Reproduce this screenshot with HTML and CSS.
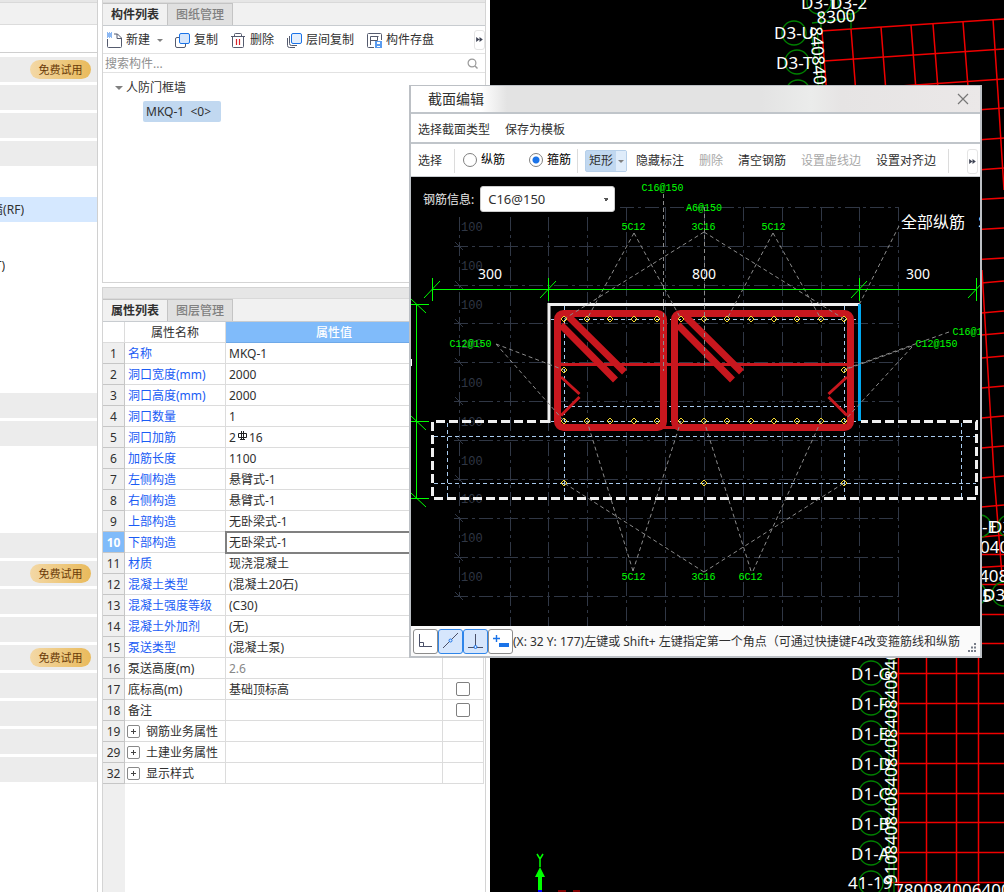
FILE: index.html
```html
<!DOCTYPE html>
<html lang="zh-CN">
<head>
<meta charset="utf-8">
<title>截面编辑</title>
<link rel="stylesheet" href="styles.css">
</head>
<body>
<div class="app">
  <nav class="side">
    <div class="strip"></div>
    <div class="side-head"></div>
    <div class="side-tools"></div>
    <ul class="modules">
      <li class="group"><button class="badge">免费试用</button></li>
      <li class="group"></li><li class="group"></li><li class="group"></li>
      <li></li>
      <li class="current"><span class="cut">墙(RF)</span></li>
      <li></li>
      <li><span class="cut short">T)</span></li>
      <li></li><li></li><li></li><li></li>
      <li class="group"></li><li class="group"></li>
      <li></li><li></li><li></li>
      <li class="group"></li>
      <li class="group"><button class="badge">免费试用</button></li>
      <li class="group"></li><li class="group"></li>
      <li class="group"><button class="badge">免费试用</button></li>
      <li class="group"></li><li class="group"></li><li class="group"></li><li class="group"></li>
    </ul>
  </nav>

  <main class="mid">
    <section class="panel components">
      <div class="strip"></div>
      <div class="tabs"><button class="tab on">构件列表</button><button class="tab">图纸管理</button></div>
      <div class="toolbar">
        <button class="tool new"><svg width="17" height="17" viewBox="0 0 17 17"><path d="M1.500 7v7.500q0 1 1 1h12q1 0 1-1V6l-4-4H8M11 2v4.500h4.500" fill="none" stroke="#555b6e"/><path d="M1 1h1M3 1h1M5 1h1M2 2h1M4 2h1M1 3h1M3 3h1M5 3h1M2 4h1M4 4h1M1 5h1M3 5h1M5 5h1" stroke="#1a73e8" stroke-width="1.200"/></svg>新建<i class="caret"></i></button>
        <button class="tool"><svg width="17" height="17" viewBox="0 0 17 17"><rect x="1.500" y="5.500" width="10" height="10" rx="1.500" fill="#fff" stroke="#555b6e"/><rect x="5.500" y="1.500" width="10" height="10" rx="1.500" fill="#d6e6fc" stroke="#1a73e8"/></svg>复制</button>
        <button class="tool"><svg width="17" height="17" viewBox="0 0 17 17"><path d="M1 4.500h14M4.500 4V2.500q0-1 1-1h5q1 0 1 1V4M2.500 5v9.500q0 1 1 1h9q1 0 1-1V5" fill="none" stroke="#555b6e"/><path d="M6.500 7v6M9.500 7v6" stroke="#d8232a" stroke-width="1.200"/></svg>删除</button>
        <button class="tool"><svg width="17" height="17" viewBox="0 0 17 17"><path d="M1.500 6v7.500q0 2 2 2H9M3.500 4v7.500q0 2 2 2H11" fill="none" stroke="#555b6e"/><rect x="5.500" y="1.500" width="10" height="10" rx="1.500" fill="#e4effd" stroke="#1a73e8"/></svg>层间复制</button>
        <button class="tool"><svg width="17" height="17" viewBox="0 0 17 17"><path d="M15.500 8V2.500q0-1-1-1h-12q-1 0-1 1v12q0 1 1 1H8M4.500 13V4.500h8M4.500 8.500h7V5" fill="none" stroke="#555b6e"/><path d="M9 9h7v7H9z" fill="#5a9cf0"/><path d="M11 10h3v2h-3zM11 14h3v1h-3z" fill="#fff"/></svg>构件存盘</button>
        <button class="more" aria-label="更多"><svg width="7" height="5" viewBox="0 0 8 6"><path d="M0 0l4 3-4 3zM4 0l4 3-4 3z" fill="#3f4455"/></svg></button>
      </div>
      <label class="search"><input type="text" placeholder="搜索构件..." aria-label="搜索构件"><svg width="12" height="12" viewBox="0 0 12 12"><circle cx="5" cy="5" r="3.900" fill="none" stroke="#999" stroke-width="1.200"/><path d="M8 8l2.500 2.500" stroke="#999" stroke-width="1.400"/></svg></label>
      <div class="tree">
        <div class="node"><i class="open"></i>人防门框墙</div>
        <div class="leaf">MKQ-1&nbsp; &lt;0&gt;</div>
      </div>
    </section>

    <section class="panel props">
      <div class="strip wide"></div>
      <div class="tabs"><button class="tab on">属性列表</button><button class="tab">图层管理</button></div>
      <div class="sheet">
        <table>
          <colgroup><col class="c-no"><col class="c-name"><col class="c-val"><col class="c-chk"></colgroup>
          <thead><tr><th></th><th>属性名称</th><th class="hot">属性值</th><th class="hot"></th></tr></thead>
          <tbody class="blue">
            <tr><th>1</th><td>名称</td><td>MKQ-1</td><td></td></tr>
            <tr><th>2</th><td>洞口宽度(mm)</td><td>2000</td><td></td></tr>
            <tr><th>3</th><td>洞口高度(mm)</td><td>2000</td><td></td></tr>
            <tr><th>4</th><td>洞口数量</td><td>1</td><td></td></tr>
            <tr><th>5</th><td>洞口加筋</td><td>2<svg class="rebar" width="11" height="12" viewBox="0 0 11 12"><path d="M1.500 3.500h8v4h-8zM4.500 1v8M6.500 1v8M3 9.500h5" fill="none" stroke="#222"/></svg>16</td><td></td></tr>
            <tr><th>6</th><td>加筋长度</td><td>1100</td><td></td></tr>
            <tr><th>7</th><td>左侧构造</td><td>悬臂式-1</td><td></td></tr>
            <tr><th>8</th><td>右侧构造</td><td>悬臂式-1</td><td></td></tr>
            <tr><th>9</th><td>上部构造</td><td>无卧梁式-1</td><td></td></tr>
            <tr class="active"><th>10</th><td>下部构造</td><td>无卧梁式-1</td><td></td></tr>
            <tr><th>11</th><td>材质</td><td>现浇混凝土</td><td></td></tr>
            <tr><th>12</th><td>混凝土类型</td><td>(混凝土20石)</td><td></td></tr>
            <tr><th>13</th><td>混凝土强度等级</td><td>(C30)</td><td></td></tr>
            <tr><th>14</th><td>混凝土外加剂</td><td>(无)</td><td></td></tr>
            <tr><th>15</th><td>泵送类型</td><td>(混凝土泵)</td><td></td></tr>
          </tbody>
          <tbody>
            <tr><th>16</th><td>泵送高度(m)</td><td class="dim">2.6</td><td></td></tr>
            <tr><th>17</th><td>底标高(m)</td><td>基础顶标高</td><td class="chk"><input type="checkbox" aria-label="底标高"></td></tr>
            <tr><th>18</th><td>备注</td><td></td><td class="chk"><input type="checkbox" aria-label="备注"></td></tr>
            <tr><th>19</th><td><button class="plus" aria-label="展开"></button>钢筋业务属性</td><td></td><td></td></tr>
            <tr><th>29</th><td><button class="plus" aria-label="展开"></button>土建业务属性</td><td></td><td></td></tr>
            <tr><th>32</th><td><button class="plus" aria-label="展开"></button>显示样式</td><td></td><td></td></tr>
          </tbody>
        </table>
      </div>
    </section>
  </main>

  <div class="model">
    <svg class="plan" width="514" height="892" viewBox="490 0 514 892">
      <g fill="none" stroke="#f00000" stroke-width="1.500">
        <path d="M821 31L1004 19M824 61L1004 49M826 91L1004 79M826 121L1004 108M826 151L1004 138M826 181L1004 168M970 200l34-2M970 230l34-2M970 260l34-2M970 284l34-3M970 314l34-3M970 336l34-3M970 359l34-3M970 389l34-3M970 419l34-3M970 449l34-3M970 479l34-3M970 508l34-3M970 538l34-3M970 554.500h34M970 568l34-2M970 584.500h34M970 614.500h34M970 643.500h34"/>
        <path d="M822 31l5 65M851 29l5 65M881 27l5 65M911 25l5 65M933 24l5 65M963 22l5 65M993 19l5 75 6 96M982 270l12 205 8 100"/>
        <path d="M898.500 650v242M926.500 650v242M956.500 650v242M978.500 650v242M888 673.500h116M888 703.500h116M888 733.500h116M888 763.500h116M888 793.500h116M888 822.500h116M888 852.500h116M888 882.500h116"/>
      </g>
      <g fill="none" stroke="#008000" stroke-width="1.300">
        <circle cx="819" cy="2" r="12"/><circle cx="850" cy="2" r="12"/><circle cx="794" cy="33" r="12"/><circle cx="797" cy="62" r="12"/><circle cx="798" cy="92" r="12"/>
        <path d="M821 14v17M851 14v15M812 23l39-5M811 30l8 60M817 30l6 60"/>
        <circle cx="980" cy="526" r="11"/><circle cx="1009" cy="526" r="11"/><circle cx="974" cy="594" r="12"/><circle cx="1004" cy="594" r="12"/>
        <circle cx="871" cy="673" r="12"/><circle cx="871" cy="703" r="12"/><circle cx="871" cy="733" r="12"/><circle cx="871" cy="763" r="12"/><circle cx="871" cy="793" r="12"/><circle cx="871" cy="823" r="12"/><circle cx="871" cy="853" r="12"/><circle cx="871" cy="883" r="12"/>
        <path d="M889 650v242M894 650v242"/>
      </g>
      <g class="plan-text">
        <text x="801" y="9">D3-1</text><text x="830" y="9">D3-2</text><text transform="translate(817 24) rotate(-4)">8300</text>
        <text x="774" y="39">D3-U</text><text x="776" y="69">D3-T</text>
        <text transform="translate(810 27) rotate(86)">840840</text>
        <text x="982" y="533">-E</text><text x="990" y="533">D3</text><text x="980" y="553">040</text><text x="979" y="582">408</text><text x="982" y="602">5</text><text x="983" y="601">D3</text>
        <text x="851" y="680">D1-G</text><text x="851" y="710">D1-F</text><text x="851" y="740">D1-E</text><text x="851" y="770">D1-D</text><text x="851" y="800">D1-C</text><text x="851" y="830">D1-B</text><text x="851" y="860">D1-A</text><text x="848" y="889">41-19</text>
        <text transform="translate(897 884) rotate(-90)">9108408408408408408408408</text>
        <text x="894" y="896">78008400640084</text>
      </g>
      <path d="M537 854l3 5 3-5M540 859v8" fill="none" stroke="#0f0" stroke-width="1.500"/>
      <path d="M540 867l5 10h-3v13h-4v-13h-3z" fill="#0f0"/>
      <path d="M538 890h4v2h-4z" fill="#00f"/><path d="M558 891h8M573 891h7" stroke="#f00"/>
    </svg>
  </div>
</div>

<div class="dialog" role="dialog" aria-label="截面编辑">
  <header class="title"><span>截面编辑</span><button class="close" aria-label="关闭"><svg width="12" height="12" viewBox="0 0 12 12"><path d="M1 1l10 10M11 1L1 11" stroke="#777" stroke-width="1.200"/></svg></button></header>
  <div class="menu"><button>选择截面类型</button><button>保存为模板</button></div>
  <div class="tools">
    <button class="pick">选择</button><i class="sep"></i>
    <label class="radio first"><input type="radio" name="bar">纵筋</label>
    <label class="radio"><input type="radio" name="bar" checked>箍筋</label><i class="sep"></i>
    <button class="split"><span>矩形</span><b><i class="caret"></i></b></button>
    <div class="acts"><button>隐藏标注</button><button disabled>删除</button><button>清空钢筋</button><button disabled>设置虚线边</button><button>设置对齐边</button></div>
    <i class="sep"></i>
    <button class="more" aria-label="更多"><svg width="7" height="5" viewBox="0 0 8 6"><path d="M0 0l4 3-4 3zM4 0l4 3-4 3z" fill="#3f4455"/></svg></button>
  </div>
  <div class="canvas">
    <svg class="section" viewBox="411 177 569 449" preserveAspectRatio="xMinYMin slice">
      <g fill="none" stroke="#303745" stroke-dasharray="14 4 3 4">
        <path d="M459.500 217v380M510.500 217v409M548.500 217v409M587.500 217v409M626.500 207v419M665.500 207v419M704.500 207v419M743.500 207v419M782.500 207v419M821.500 207v419M859.500 207v419M898.500 207v419"/>
        <path d="M620 207.500h279M454 246.500h445M454 285.500h445M454 323.500h445M454 362.500h445M454 401.500h445M454 440.500h445M454 479.500h445M454 518.500h445M454 557.500h445M454 596.500h445"/>
      </g>
      <path d="M455 242l8 8M455 281l8 8M455 319l8 8M455 358l8 8M455 397l8 8M455 436l8 8M455 475l8 8M455 514l8 8M455 553l8 8M455 592l8 8" stroke="#303745"/>
      <g class="scale"><text x="461" y="231">100</text><text x="461" y="270">100</text><text x="461" y="309">100</text><text x="461" y="348">100</text><text x="461" y="387">100</text><text x="461" y="426">100</text><text x="461" y="465">100</text><text x="461" y="503">100</text><text x="461" y="542">100</text><text x="461" y="581">100</text></g>
      <g fill="none" stroke="#a9cbee" stroke-dasharray="4 3">
        <path d="M551 319.500h308M564.500 306v192M844.500 306v192M564 406.500h295M551 421.500h308M434 436.500h542M447.500 423v75M961.500 423v75M434 483.500h542"/>
      </g>
      <g fill="none" stroke="#c8171e">
        <rect x="557.500" y="313.500" width="106" height="114" rx="6" stroke-width="7"/>
        <rect x="674.500" y="313.500" width="176" height="114" rx="6" stroke-width="7"/>
        <path d="M561 325l54.500 55M568 316l56.500 56M678 325l54.500 55M685 316l56.500 56" stroke-width="7"/>
        <path d="M558 364.500h292M660 427.500h18M561 377l18.500 17M579.500 397L561 415.500M847 377l-18.500 17M828.500 397L847 415.500" stroke-width="3"/>
      </g>
      <path d="M549 423V304.500h311" fill="none" stroke="#f0f0f0" stroke-width="3"/>
      <path d="M549 421.500H432.500V498.500H976.500V421.500H861" fill="none" stroke="#f0f0f0" stroke-width="3" stroke-dasharray="9 4"/>
      <path d="M859.500 304v117" stroke="#00a8f0" stroke-width="3"/>
      <path d="M411 359h1v7h-1z" fill="#fff"/>
      <g fill="none" stroke="#f5d832">
        <path id="dots" d="M561 319l3-3 3 3-3 3zM584 319l3-3 3 3-3 3zM607 319l3-3 3 3-3 3zM631 319l3-3 3 3-3 3zM654 319l3-3 3 3-3 3zM678 319l3-3 3 3-3 3zM701 319l3-3 3 3-3 3zM724 319l3-3 3 3-3 3zM748 319l3-3 3 3-3 3zM771 319l3-3 3 3-3 3zM794 319l3-3 3 3-3 3zM818 319l3-3 3 3-3 3zM841 319l3-3 3 3-3 3z"/>
        <use href="#dots" y="102"/>
        <path d="M561 370l3-3 3 3-3 3zM841 370l3-3 3 3-3 3zM561 483l3-3 3 3-3 3zM701 483l3-3 3 3-3 3zM841 483l3-3 3 3-3 3z"/>
      </g>
      <g fill="none" stroke="#8c8c8c" stroke-dasharray="4 3">
        <path d="M663.500 194v177M634 233l-47 86M634 233l47 86M704 232L564 319M704.500 207v158M704 232l140 87M773 233l-46 86M773 233l48 86M899 226l-40 79"/>
        <path d="M496 344l68 26M496 344l68 77M912 346l-68 24M949 332l-104 37M912 347l-68 74"/>
        <path d="M633 571l-46-150M633 571l48-150M704 572l-140-89M704 572l140-89M751 571l-47-150M753 571l68-150"/>
      </g>
      <g fill="none" stroke="#0f0">
        <path d="M432 289.500h545M432.500 278v23M548.500 278v23M859.500 278v23M976.500 278v23M416.500 304v195M411 304.500h18M411 421.500h18M411 498.500h18"/>
        <path d="M424 298l16-17M540 298l16-17M851 298l16-17M968 298l16-17M411 299l15 14M411 416l15 14M411 493l15 14"/>
      </g>
      <g class="tags">
        <text x="662.500" y="191">C16@150</text><text x="704" y="211">A6@150</text><text x="633.500" y="230">5C12</text><text x="703.500" y="230">3C16</text><text x="773.500" y="230">5C12</text>
        <text x="470.500" y="347">C12@150</text><text x="936.500" y="347">C12@150</text><text x="973.500" y="335">C16@150</text>
        <text x="633.500" y="580">5C12</text><text x="703.500" y="580">3C16</text><text x="750.500" y="580">6C12</text>
      </g>
      <g class="sizes"><text x="490" y="279">300</text><text x="704" y="279">800</text><text x="918" y="279">300</text></g>
      <g class="all"><text x="901" y="228">全部纵筋</text><text x="978" y="228">S</text></g>
    </svg>
    <div class="info"><label for="rebar">钢筋信息:</label><select id="rebar"><option>C16@150</option></select></div>
  </div>
  <footer class="status">
    <div class="snaps">
      <button aria-label="正交"><svg width="16" height="16" viewBox="0 0 16 16"><path d="M1.500 1v12.500H14M1.500 9.500h4v4" fill="none" stroke="#4a5068"/></svg></button>
      <button class="on" aria-label="中点"><svg width="16" height="16" viewBox="0 0 16 16"><path d="M0 15L15 0" stroke="#4a5068"/><circle cx="7.500" cy="7.500" r="1.500" fill="#d6e6fc" stroke="#1a73e8"/></svg></button>
      <button class="on" aria-label="垂点"><svg width="16" height="16" viewBox="0 0 16 16"><path d="M0 14.500h15M7.500 1v13" stroke="#4a5068"/><circle cx="7.500" cy="14" r="1.500" fill="#d6e6fc" stroke="#1a73e8"/></svg></button>
      <button aria-label="动态输入"><svg width="18" height="16" viewBox="0 0 18 16"><path d="M1 5.500h7M4.500 2v7" stroke="#1a73e8" stroke-width="1.400"/><path d="M7 10h10v4H7z" fill="#1a73e8"/></svg></button>
    </div>
    <span class="hint">(X: 32 Y: 177)左键或 Shift+ 左键指定第一个角点（可通过快捷键F4改变箍筋线和纵筋</span>
    <svg class="grip" width="10" height="10" viewBox="0 0 10 10"><path d="M7 0h2v2H7zM4 3.500h2v2H4zM7 3.500h2v2H7zM1 7h2v2H1zM4 7h2v2H4zM7 7h2v2H7z" fill="#777c88"/></svg>
  </footer>
</div>
</body>
</html>
```
FILE: styles.css
```css
* { box-sizing: border-box; }
body { margin: 0; font: 12px/20px "Noto Sans", "Noto Sans CJK SC", sans-serif; color: #303030; overflow: hidden; }
button { font: inherit; color: inherit; background: none; border: 0; padding: 0; margin: 0; white-space: nowrap; }
ul { list-style: none; margin: 0; padding: 0; }
svg { display: block; flex: none; }
i { display: block; }

.app { display: flex; height: 100vh; background: #fff; }
.strip { height: 3px; background: #e6e6e6; border-bottom: 1px solid #d9d9d9; flex: none; }
.strip.wide { height: 11px; }

.side { flex: none; width: 98px; border-right: 1px solid #d0d0d0; }
.side-head { height: 22px; background: #f1f1f1; border-bottom: 1px solid #dcdcdc; }
.side-tools { height: 28px; border-bottom: 1px solid #cfcfcf; }
.modules { display: flex; flex-direction: column; gap: 3px; padding-top: 4px; }
.modules li { height: 25px; display: flex; align-items: center; }
.modules .group { background: #ececec; justify-content: flex-end; padding-right: 6px; }
.modules .current { background: #d5e8ff; }
.cut { display: flex; justify-content: flex-end; width: 24px; overflow: hidden; white-space: nowrap; }
.cut.short { width: 5px; }
.badge { width: 61px; height: 19px; border-radius: 10px; background: linear-gradient(90deg, #f3d8a6, #e9ba5b); color: #6a3a08; font-size: 11px; line-height: 19px; }

.mid { flex: none; width: 384px; margin: 0 4px; display: flex; flex-direction: column; gap: 4px; }
.panel { border: 1px solid #d4d4d4; display: flex; flex-direction: column; }
.components { height: 283px; border-top: 0; }
.props { flex: 1; border-bottom: 0; min-height: 0; }
.tabs { display: flex; height: 23px; background: #f1f1f1; border-bottom: 1px solid #c8ccd0; flex: none; }
.tab { width: 65px; background: #e0e0e0; color: #808080; font-weight: 500; border: 1px solid #c4c4c4; border-width: 1px 1px 0 0; line-height: 20px; }
.tab.on { background: #f1f1f1; color: #303030; font-weight: 600; }
.toolbar { display: flex; align-items: center; gap: 12px; height: 28px; padding-left: 3px; border-bottom: 1px solid #e2e2e2; }
.tool { display: flex; align-items: center; gap: 3px; line-height: 22px; padding-top: 1px; }
.caret { border: 3px solid transparent; border-top: 3px solid #808080; border-bottom: 0; }
.tool .caret { margin-left: 4px; }
.new { margin-right: -1px; }
.more { width: 11px; height: 20px; margin-left: auto; border: 1px solid #e4e4e4; border-radius: 3px; display: flex; align-items: center; justify-content: center; }
.search { display: flex; align-items: center; height: 19px; padding: 1px 6px 0 2px; border-bottom: 1px solid #e2e2e2; }
.search input { flex: 1; border: 0; outline: 0; padding: 0; font: inherit; height: 18px; background: none; }
.search input::placeholder { color: #909090; }
.tree { padding: 3px 12px; }
.node { display: flex; align-items: center; gap: 3px; line-height: 24px; }
.open { border: 4px solid transparent; border-top: 4px solid #808080; border-bottom: 0; }
.leaf { width: 78px; margin: 1px 0 0 28px; padding-left: 3px; line-height: 21px; background: #c1d8f0; border-radius: 2px; }

.sheet { flex: 1; background: linear-gradient(90deg, #efefef 22px, #fff 22px); overflow: hidden; }
table { table-layout: fixed; width: 381px; border-spacing: 0; background: #fff; }
.c-no { width: 22px; } .c-name { width: 101px; } .c-val { width: 217px; } .c-chk { width: 41px; }
th, td { height: 21px; padding: 2px 0 0 3px; line-height: 18px; font-weight: 400; text-align: left; border: 1px solid #dcdcdc; border-width: 0 1px 1px 0; white-space: nowrap; overflow: hidden; }
thead th { text-align: center; padding: 2px 0 0; }
thead .hot { background: #80bbfa; color: #fff; font-weight: 500; border-color: #6fa9e8; }
tbody th { background: #efefef; text-align: center; padding: 2px 0 0; border-color: #c6c6c6; }
.blue td:nth-child(2) { color: #1a5cf5; }
.active th { background: #80bbfa; color: #fff; font-weight: 700; }
.active td:nth-child(3) { outline: 2px solid #808080; outline-offset: -1px; }
.dim { color: #888; }
.rebar { display: inline-block; margin: 0 1px; vertical-align: 0; }
td.chk { text-align: center; padding: 0; }
td.chk input { appearance: none; display: block; width: 14px; height: 14px; margin: 0 auto; border: 1px solid #808080; border-radius: 2px; background: #fff; }
.plus { display: inline-block; vertical-align: -1px; width: 13px; height: 13px; margin-right: 6px; margin-left: -1px; border: 1px solid #888; border-radius: 2px; background: linear-gradient(#444, #444) center / 5px 1px no-repeat, linear-gradient(#444, #444) center / 1px 5px no-repeat; }

.model { flex: 1; min-width: 0; background: #000; overflow: hidden; }
.plan-text { font: 17px "Noto Sans", sans-serif; fill: #fff; }

.dialog { position: absolute; left: 409px; top: 85px; width: 573px; display: flex; flex-direction: column; border: 2px solid #bcc0c5; border-top-width: 1px; background: #fff; }
.title { display: flex; align-items: center; justify-content: space-between; height: 28px; padding: 0 11px 0 17px; font-size: 14px; border-bottom: 2px solid #c0c5ca; background: linear-gradient(90deg, #fff 70px, #e3e3e3 96px, #e3e3e3 350px, #ebeceb 400px, #e6e4e4 430px, #ebe8e8); }
.menu { display: flex; gap: 15px; height: 30px; padding: 3px 0 0 7px; border-bottom: 2px solid #c0c5ca; }
.tools { display: flex; align-items: center; height: 33px; padding: 2px 2px 0 7px; border-bottom: 1px solid #c8ccd0; }
.sep { width: 1px; height: 24px; background: #dcdcdc; flex: none; }
.pick { margin-right: 12px; }
.radio { display: flex; align-items: center; gap: 4px; color: #000; margin: 0 6px 3px 0; }
.radio.first { margin: 0 24px 3px 8px; }
.radio input { appearance: none; width: 14px; height: 14px; margin: 0; border: 1px solid #808080; border-radius: 50%; background: #fff; }
.radio input:checked { background: radial-gradient(circle, #1a73e8 3px, #fff 4px); }
.split { display: flex; width: 42px; height: 22px; margin: 0 9px 0 7px; background: #c1d8f0; border: 1px solid #b7d0ea; border-radius: 2px; line-height: 20px; }
.split span { width: 30px; }
.split b { flex: 1; display: flex; align-items: center; justify-content: center; background: #dfecfa; }
.acts { display: flex; gap: 15px; margin-right: 12px; }
.acts button:disabled { color: #a8a8a8; }
.tools .more { height: 25px; }
.canvas { display: grid; height: 449px; background: #000; }
.section { grid-area: 1 / 1; width: 100%; height: 100%; min-height: 0; }
.info { grid-area: 1 / 1; align-self: start; justify-self: start; display: flex; align-items: center; gap: 6px; padding: 9px 0 0 12px; color: #e8e8e8; }
.info label { padding-top: 2px; }
.info select { appearance: none; width: 135px; height: 26px; padding: 0 7px; font: inherit; font-size: 13px; color: #303030; border: 1px solid #ccc; border-radius: 3px; background-color: #fff; background-image: linear-gradient(to bottom left, #555 50%, transparent 50%), linear-gradient(to bottom right, #555 50%, transparent 50%); background-size: 3px 3px; background-position: 122px 11px, 125px 11px; background-repeat: no-repeat; }
.scale { font: 12px "Liberation Mono", monospace; fill: #303745; }
.tags { font: 10px "Liberation Mono", monospace; fill: #0f0; text-anchor: middle; }
.sizes { font: 14px "Noto Sans", sans-serif; fill: #fff; text-anchor: middle; }
.all { font: 16px "Noto Sans CJK SC", sans-serif; fill: #fff; }
.status { display: flex; align-items: center; height: 30px; padding: 0 3px 0 2px; background: #fafafa; }
.snaps { display: flex; flex: none; }
.snaps button { width: 25px; height: 25px; display: flex; align-items: center; justify-content: center; background: #fff; border: 1px solid #8c8c8c; border-radius: 3px; }
.snaps .on { background: #d6e6fc; border-color: #2f86ea; }
.hint { flex: 1; min-width: 0; margin-right: 7px; padding-top: 2px; overflow: hidden; white-space: nowrap; }
.grip { align-self: flex-end; margin-bottom: 3px; }
```
